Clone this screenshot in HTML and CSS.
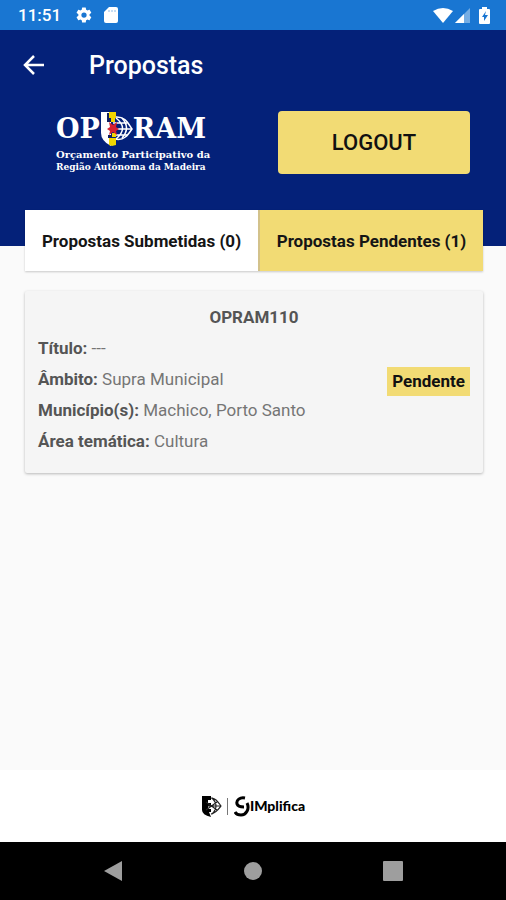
FILE: index.html
```html
<!DOCTYPE html>
<html lang="pt">
<head>
<meta charset="utf-8">
<meta name="viewport" content="width=device-width, initial-scale=1">
<title>Propostas</title>
<link rel="stylesheet" href="styles.css">
</head>
<body>
<div class="status">
  <span class="time">11:51</span>
  <svg class="gear" width="18" height="18" viewBox="0 0 24 24" fill="currentColor"><path d="M19.4 13a7.500 7.500 0 0 0 0-2l2.100-1.700c.2-.1.300-.4.100-.6l-2-3.500c-.1-.2-.4-.3-.6-.2l-2.500 1a7.300 7.300 0 0 0-1.700-1l-.4-2.600a.5.500 0 0 0-.5-.4h-4a.5.500 0 0 0-.5.400L9 5a7.700 7.700 0 0 0-1.700 1l-2.500-1c-.2-.1-.5 0-.6.200l-2 3.500c-.1.200-.1.500.1.600L4.500 11a7.900 7.900 0 0 0 0 2l-2.200 1.700c-.2.100-.2.400-.1.600l2 3.500c.1.200.4.300.6.200l2.500-1c.5.400 1.100.7 1.700 1l.4 2.600c0 .2.200.4.500.4h4c.2 0 .5-.2.500-.4l.4-2.600a7 7 0 0 0 1.700-1l2.500 1c.2.100.5 0 .6-.2l2-3.500c.1-.2.100-.5-.1-.6zM12 15.500a3.500 3.500 0 1 1 0-7 3.500 3.500 0 0 1 0 7z"/></svg>
  <svg class="sd" width="14" height="16" viewBox="0 0 14 16"><path fill="currentColor" d="M5 0h7q2 0 2 2v12q0 2-2 2H2q-2 0-2-2V5z"/><path d="M5 3v2M8 3v2M11 3v2" stroke="#8dbbe8"/></svg>
  <svg class="wifi" width="20" height="15" viewBox="0 0 20 15"><path fill="currentColor" d="M0 3Q10-3 20 3L10 15z"/></svg>
  <svg width="15" height="15" viewBox="0 0 15 15"><path fill="#75ade4" d="M15 0v15H0z"/><path fill="currentColor" d="M9 6v9H0z"/></svg>
  <svg class="battery" width="11" height="17" viewBox="0 0 11 17"><path fill="currentColor" d="M3 0h5v2h2q1 0 1 1v13q0 1-1 1H1q-1 0-1-1V3q0-1 1-1h2z"/><path d="M7 4 3 10h2v4l4-6H6z" fill="#1976d2"/></svg>
</div>
<header>
  <div class="bar">
    <a class="back" href="#" aria-label="Voltar"><svg width="22" height="20" viewBox="0 0 22 20" fill="none" stroke="currentColor" stroke-width="2.500"><path d="M21 10H2M11 1 2 10l9 9"/></svg></a>
    <h1>Propostas</h1>
  </div>
  <div class="brand-row">
    <div class="brand">
      <div class="wordmark"><span>OP</span>
        <svg width="33" height="36" viewBox="0 0 33 36">
          <path fill="#fff" d="M1 1h10v34Q1 30 1 22z"/>
          <g fill="none" stroke="#fff" stroke-width="1.500"><path d="M15 6c10-1 13 6 17 12-4 6-8 12-17 10"/><path d="M16 7q13 10 0 21M22 7q9 10 0 20M13 12h14M13 18h19M13 24h14"/></g>
          <path fill="#f2d600" d="M9 1h7v6H9zM11 7h4v4h-4zM9 27h7v7l-4 1-3-1zM12 22h4v4h-4z"/>
          <path fill="#102060" d="M7 2h2v5h2v4H7zM8 24h4v3H8z"/>
          <path fill="#d51f30" d="m9 11 4 3 4-3-1 5 3 2-3 2 1 4-4-3-4 3 1-4-3-2 3-2z"/>
        </svg><span>RAM</span></div>
      <p class="line-top">Orçamento Participativo da</p>
      <p class="line-bottom">Região Autónoma da Madeira</p>
    </div>
    <button class="logout" type="button">LOGOUT</button>
  </div>
</header>
<main>
  <nav class="tabs">
    <button type="button">Propostas Submetidas (0)</button>
    <button class="active" type="button">Propostas Pendentes (1)</button>
  </nav>
  <article class="card">
    <h2>OPRAM110</h2>
    <div class="card-body">
      <dl>
        <div><dt>Título:</dt> <dd>---</dd></div>
        <div><dt>Âmbito:</dt> <dd>Supra Municipal</dd></div>
        <div><dt>Município(s):</dt> <dd>Machico, Porto Santo</dd></div>
        <div><dt>Área temática:</dt> <dd>Cultura</dd></div>
      </dl>
      <span class="badge">Pendente</span>
    </div>
  </article>
</main>
<footer>
  <svg width="21" height="23" viewBox="0 0 21 23"><path d="M1 1h9v4H7v3h3v3H7v3h3v3H8l2 5Q1 20 1 15z"/><g fill="none" stroke="#222" stroke-width="1.200"><path d="M10 3c5 0 7 4 10 8-3 4-5 7-10 8M11 3q8 8 0 16M5 7l11 8M5 15l11-8M7 11h13"/></g></svg>
  <span class="divider"></span>
  <div class="simplifica"><svg width="16" height="21" viewBox="0 0 16 21" role="img" aria-label="S" fill="none" stroke="#000" stroke-width="3"><path d="M11 2C6 1 2 4 3 8c1 3 5 3 7 3M13 7c3 6-1 12-6 12-3 0-5-1-6-3"/></svg><span>IMplifica</span></div>
</footer>
<nav class="system">
  <button type="button" aria-label="Voltar"><svg width="20" height="20" viewBox="0 0 20 20"><path fill="currentColor" d="M19 0v20L1 10z"/></svg></button>
  <button type="button" aria-label="Início"><svg width="20" height="20" viewBox="0 0 20 20"><circle fill="currentColor" cx="10" cy="10" r="9"/></svg></button>
  <button type="button" aria-label="Recentes"><svg width="20" height="20" viewBox="0 0 20 20"><rect fill="currentColor" width="20" height="20" rx="1"/></svg></button>
</nav>
</body>
</html>
```
FILE: styles.css
```css
* { box-sizing: border-box; }
body {
  margin: 0;
  min-height: 100vh;
  display: flex;
  flex-direction: column;
  background: #fafafa;
  font-family: Roboto, "Liberation Sans", sans-serif;
}
h1, h2, p, dl, dd { margin: 0; }
svg { display: block; flex: none; }
button { border: 0; padding: 0; font-family: inherit; cursor: pointer; }

.status {
  display: flex;
  align-items: center;
  height: 30px;
  padding: 0 16px 0 18px;
  background: #1976d2;
  color: #fff;
}
.time { font-size: 17px; font-weight: 500; line-height: 24px; }
.gear { margin-left: 14px; }
.sd { margin-left: 11px; }
.wifi { margin-left: auto; margin-right: 2px; }
.battery { margin-left: 9px; }

header {
  background: #042179;
  color: #fff;
  padding-bottom: 72px;
}
.bar { display: flex; align-items: center; height: 70px; padding-left: 23px; }
.back { color: #fff; width: 66px; }
h1 { font-size: 25px; font-weight: 500; line-height: 34px; padding-top: 2px; }
.brand-row {
  display: flex;
  justify-content: space-between;
  padding: 11px 36px 0 56px;
}
.wordmark {
  display: flex;
  align-items: center;
  height: 36px;
  font: bold 27px/36px "DejaVu Serif", serif;
}
.brand p { font-family: "DejaVu Serif", serif; font-weight: bold; line-height: 12px; }
.brand .line-top { margin-top: 2px; font-size: 10px; }
.brand .line-bottom { font-size: 9px; }
.logout {
  width: 192px;
  height: 63px;
  border-radius: 4px;
  background: #f2db74;
  color: #111;
  font-size: 22px;
  font-weight: 500;
}

main { flex: 1; margin-top: -36px; padding: 0 23px 0 25px; }
.tabs { display: flex; box-shadow: 0 1px 2px #0003; }
.tabs button {
  flex: 234 1 0;
  height: 61px;
  background: #fff;
  color: #151515;
  font-size: 17px;
  font-weight: 700;
  white-space: nowrap;
}
.tabs .active { flex-grow: 224; background: #f2db74; border-left: 2px solid #d3c28b; }

.card {
  margin-top: 20px;
  padding: 10px 13px 16px;
  background: #f5f5f5;
  border-radius: 2px;
  box-shadow: 0 1px 3px #0004;
}
h2 { color: #555; font-size: 17px; font-weight: 700; line-height: 32px; text-align: center; }
.card-body { display: flex; justify-content: space-between; align-items: flex-start; }
dl { color: #757575; font-size: 17px; }
dl > div { line-height: 31px; }
dt, dd { display: inline; }
dt { color: #555; font-weight: 700; }
dd { font-weight: 400; }
.badge {
  margin-top: 34px;
  padding: 0 5px;
  background: #f2db74;
  color: #111;
  font-size: 17px;
  font-weight: 700;
  line-height: 29px;
}

footer {
  display: flex;
  justify-content: center;
  align-items: center;
  height: 72px;
  background: #fff;
}
.divider { width: 1px; height: 17px; margin: 0 6px 0 5px; background: #777; }
.simplifica { display: flex; align-items: center; font: 900 14px/20px Lato, sans-serif; }
.system {
  display: flex;
  justify-content: center;
  align-items: center;
  gap: 120px;
  height: 58px;
  background: #000;
}
.system button { background: none; color: #9e9e9e; }
```
